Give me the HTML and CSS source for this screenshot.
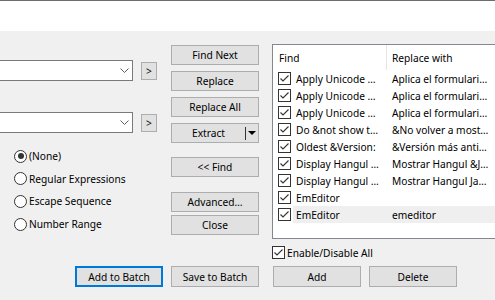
FILE: index.html
```html
<!DOCTYPE html>
<html lang="en">
<head>
    <meta charset="UTF-8">
    <title>Replace in Batch</title>
    <link rel="stylesheet" href="styles.css">
</head>
<body>

    <div class="titlebar"></div>

    <div class="dialog">
        <div class="col-left">
            <div class="combo-row first">
                <div class="combo">
                    <svg width="9" height="5" viewBox="0 0 9 5"><polyline points="0.5,0.5 4.5,4.5 8.5,0.5" fill="none" stroke="#606060" stroke-width="1"/></svg>
                </div>
                <button class="mini">&gt;</button>
            </div>
            <div class="combo-row second">
                <div class="combo">
                    <svg width="9" height="5" viewBox="0 0 9 5"><polyline points="0.5,0.5 4.5,4.5 8.5,0.5" fill="none" stroke="#606060" stroke-width="1"/></svg>
                </div>
                <button class="mini">&gt;</button>
            </div>

            <div class="radios">
                <label class="radio"><span class="dot on"></span>(None)</label>
                <label class="radio"><span class="dot"></span>Regular Expressions</label>
                <label class="radio"><span class="dot"></span>Escape Sequence</label>
                <label class="radio"><span class="dot"></span>Number Range</label>
            </div>
        </div>

        <div class="col-mid">
            <button class="btn">Find Next</button>
            <button class="btn">Replace</button>
            <button class="btn">Replace All</button>
            <button class="btn split">
                <span class="split-label">Extract</span>
                <span class="split-sep"></span>
                <span class="split-arrow"><svg width="8" height="4" viewBox="0 0 8 4"><polygon points="0,0 8,0 4,4" fill="#000"/></svg></span>
            </button>
            <button class="btn find-back">&lt;&lt; Find</button>
            <button class="btn advanced">Advanced…</button>
            <button class="btn close">Close</button>
        </div>

        <div class="col-right">
            <div class="list">
                <div class="list-head">
                    <div class="h-find">Find</div>
                    <div class="h-rep">Replace with</div>
                </div>
                <div class="row"><span class="cbwrap"><span class="cb"><svg width="11" height="11" viewBox="0 0 11 11"><polyline points="1.5,5.5 4,8 9.5,2.5" fill="none" stroke="#333" stroke-width="1.1"/></svg></span></span><span class="cells"><span class="c1">Apply Unicode …</span><span class="c2">Aplica el formulari…</span></span></div>
                <div class="row"><span class="cbwrap"><span class="cb"><svg width="11" height="11" viewBox="0 0 11 11"><polyline points="1.5,5.5 4,8 9.5,2.5" fill="none" stroke="#333" stroke-width="1.1"/></svg></span></span><span class="cells"><span class="c1">Apply Unicode …</span><span class="c2">Aplica el formulari…</span></span></div>
                <div class="row"><span class="cbwrap"><span class="cb"><svg width="11" height="11" viewBox="0 0 11 11"><polyline points="1.5,5.5 4,8 9.5,2.5" fill="none" stroke="#333" stroke-width="1.1"/></svg></span></span><span class="cells"><span class="c1">Apply Unicode …</span><span class="c2">Aplica el formulari…</span></span></div>
                <div class="row"><span class="cbwrap"><span class="cb"><svg width="11" height="11" viewBox="0 0 11 11"><polyline points="1.5,5.5 4,8 9.5,2.5" fill="none" stroke="#333" stroke-width="1.1"/></svg></span></span><span class="cells"><span class="c1">Do &amp;not show t…</span><span class="c2">&amp;No volver a most…</span></span></div>
                <div class="row"><span class="cbwrap"><span class="cb"><svg width="11" height="11" viewBox="0 0 11 11"><polyline points="1.5,5.5 4,8 9.5,2.5" fill="none" stroke="#333" stroke-width="1.1"/></svg></span></span><span class="cells"><span class="c1">Oldest &amp;Version:</span><span class="c2">&amp;Versión más anti…</span></span></div>
                <div class="row"><span class="cbwrap"><span class="cb"><svg width="11" height="11" viewBox="0 0 11 11"><polyline points="1.5,5.5 4,8 9.5,2.5" fill="none" stroke="#333" stroke-width="1.1"/></svg></span></span><span class="cells"><span class="c1">Display Hangul …</span><span class="c2">Mostrar Hangul &amp;J…</span></span></div>
                <div class="row"><span class="cbwrap"><span class="cb"><svg width="11" height="11" viewBox="0 0 11 11"><polyline points="1.5,5.5 4,8 9.5,2.5" fill="none" stroke="#333" stroke-width="1.1"/></svg></span></span><span class="cells"><span class="c1">Display Hangul …</span><span class="c2">Mostrar Hangul Ja…</span></span></div>
                <div class="row"><span class="cbwrap"><span class="cb"><svg width="11" height="11" viewBox="0 0 11 11"><polyline points="1.5,5.5 4,8 9.5,2.5" fill="none" stroke="#333" stroke-width="1.1"/></svg></span></span><span class="cells"><span class="c1">EmEditor</span><span class="c2"></span></span></div>
                <div class="row hl"><span class="cbwrap"><span class="cb"><svg width="11" height="11" viewBox="0 0 11 11"><polyline points="1.5,5.5 4,8 9.5,2.5" fill="none" stroke="#333" stroke-width="1.1"/></svg></span></span><span class="cells"><span class="c1">EmEditor</span><span class="c2">emeditor</span></span></div>
            </div>
            <label class="enable"><span class="cb"><svg width="11" height="11" viewBox="0 0 11 11"><polyline points="1.5,5.5 4,8 9.5,2.5" fill="none" stroke="#333" stroke-width="1.1"/></svg></span>Enable/Disable All</label>
        </div>

        <div class="bottom">
            <button class="bbtn default">Add to Batch</button>
            <button class="bbtn">Save to Batch</button>
            <button class="bbtn add">Add</button>
            <button class="bbtn">Delete</button>
        </div>
    </div>

    <div class="frame-line"></div>

</body>
</html>
```

FILE: styles.css
```css
* {
    box-sizing: border-box;
    margin: 0;
    padding: 0;
}

body {
    font-family: 'Noto Sans', 'Open Sans', sans-serif;
    font-size: 10.2px;
    color: #000;
    background-color: #f0f0f0;
    width: 495px;
    height: 300px;
    overflow: hidden;
}

button {
    font: inherit;
    color: #000;
}

.titlebar {
    height: 31px;
    background-color: #fff;
    border-top: 1px solid #6d6d6d;
}

.dialog {
    display: grid;
    grid-template-columns: 171px 101px 1fr;
    grid-template-rows: 235px 21px;
    height: 266px;
}

/* left column: combos + radios */
.combo-row {
    display: flex;
    align-items: center;
    gap: 8px;
}

.combo-row.first {
    margin-top: 29px;
}

.combo-row.second {
    margin-top: 31px;
}

/* the combo is cut by the left window edge */
.combo {
    width: 133px;
    height: 21px;
    border: 1px solid #7a7a7a;
    border-left: none;
    background-color: #fff;
    display: flex;
    justify-content: flex-end;
    align-items: center;
    padding-right: 3px;
}

.mini {
    width: 16px;
    height: 18px;
    border: 1px solid #adadad;
    background-color: #e1e1e1;
    line-height: 14px;
}

.radios {
    margin-top: 12px;
}

.radio {
    display: flex;
    align-items: center;
    gap: 2px;
    height: 22.6px;
    padding-left: 14px;
}

.dot {
    width: 13px;
    height: 13px;
    border: 1px solid #333;
    border-radius: 50%;
    background-color: #fff;
    display: flex;
    justify-content: center;
    align-items: center;
}

.dot.on::after {
    content: "";
    width: 6px;
    height: 6px;
    border-radius: 50%;
    background-color: #333;
}

/* middle column buttons */
.col-mid {
    padding-top: 14px;
    display: flex;
    flex-direction: column;
}

.btn {
    width: 88px;
    height: 20px;
    flex: none;
    border: 1px solid #adadad;
    background-color: #e1e1e1;
    display: flex;
    justify-content: center;
    align-items: center;
    margin-bottom: 6px;
}

.btn.split {
    justify-content: flex-start;
}

.split-label {
    width: 73px;
    text-align: center;
}

.split-sep {
    width: 1px;
    height: 13px;
    background-color: #333;
}

.split-arrow {
    width: 12px;
    display: flex;
    justify-content: center;
}

.btn.find-back {
    margin-top: 8px;
}

.btn.advanced {
    margin-top: 9px;
    margin-bottom: 3px;
}

/* right column: list, cut by the right window edge */
.list {
    margin-top: 13px;
    width: 223px;
    height: 195px;
    border: 1px solid #828790;
    border-right: none;
    background-color: #fff;
    overflow: hidden;
}

.list-head {
    display: flex;
    height: 25px;
}

.h-find {
    width: 114px;
    padding-left: 6px;
    border-right: 1px solid #e5e5e5;
    display: flex;
    align-items: center;
}

.h-rep {
    padding-left: 5px;
    display: flex;
    align-items: center;
}

.row {
    display: flex;
    height: 17px;
}

.cbwrap {
    width: 20px;
    padding-left: 5px;
    display: flex;
    align-items: center;
}

.cb {
    width: 13px;
    height: 13px;
    flex: none;
    border: 1px solid #333;
    background-color: #fff;
    display: flex;
}

.cells {
    flex: 1;
    display: flex;
    align-items: center;
    white-space: nowrap;
    overflow: hidden;
}

.row.hl .cells {
    background-color: #efefef;
}

.c1 {
    width: 93px;
    flex: none;
    padding-left: 3px;
    overflow: hidden;
}

.c2 {
    padding-left: 6px;
}

.enable {
    display: flex;
    align-items: center;
    gap: 2px;
    height: 13px;
    margin-top: 7px;
}

/* bottom buttons */
.bottom {
    grid-column: 1 / -1;
    display: flex;
    padding-left: 75px;
    gap: 8px;
}

.bbtn {
    width: 88px;
    height: 21px;
    border: 1px solid #adadad;
    background-color: #e1e1e1;
}

.bbtn.default {
    border: 2px solid #0078d7;
}

.bbtn.add {
    margin-left: 6px;
}

.frame-line {
    margin-top: 10px;
    height: 1px;
    background-color: #787878;
}
```
